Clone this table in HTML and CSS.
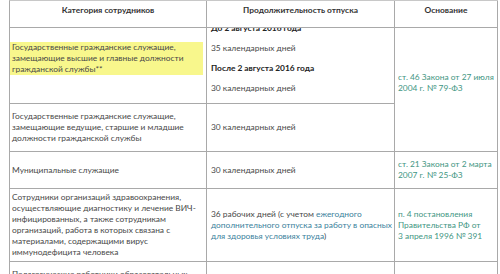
FILE: index.html
```html
<!DOCTYPE html>
<html lang="ru">
<head>
<meta charset="utf-8">
<title>Отпуск</title>
<link rel="stylesheet" href="styles.css">
</head>
<body>
<div class="sheet">
  <div class="grid head">
    <div class="th">Категория сотрудников</div>
    <div class="th">Продолжительность отпуска</div>
    <div class="th">Основание</div>
  </div>
  <div class="grid body">
    <div class="td c1"><p class="mark">Государственные гражданские служащие, замещающие высшие и главные должности гражданской службы**</p></div>
    <div class="td c2 stack">
      <p><b>До 2 августа 2016 года</b></p>
      <p>35 календарных дней</p>
      <p><b>После 2 августа 2016 года</b></p>
      <p>30 календарных дней</p>
    </div>
    <div class="td c3 span2"><p><a class="law" href="#">ст. 46 Закона от 27 июля 2004&nbsp;г. №&nbsp;79-ФЗ</a></p></div>

    <div class="td c1"><p>Государственные гражданские служащие, замещающие ведущие, старшие и младшие должности гражданской службы</p></div>
    <div class="td c2"><p>30 календарных дней</p></div>

    <div class="td c1"><p>Муниципальные служащие</p></div>
    <div class="td c2"><p>30 календарных дней</p></div>
    <div class="td c3"><p><a class="law" href="#">ст. 21 Закона от 2 марта 2007&nbsp;г. №&nbsp;25-ФЗ</a></p></div>

    <div class="td c1 tight"><p>Сотрудники организаций здравоохранения, осуществляющие диагностику и лечение ВИЧ-инфицированных, а также сотрудникам организаций, работа в которых связана с материалами, содержащими вирус иммунодефицита человека</p></div>
    <div class="td c2"><p>36 рабочих дней (с учетом <a class="ref" href="#">ежегодного дополнительного отпуска за работу в опасных для здоровья условиях труда</a>)</p></div>
    <div class="td c3"><p><a class="law" href="#">п. 4 постановления Правительства РФ от 3&nbsp;апреля 1996 №&nbsp;391</a></p></div>

    <div class="td c1"><p>Педагогические работники образовательных организаций</p></div>
    <div class="td c2"><p>56 календарных дней</p></div>
    <div class="td c3"><p><a class="law" href="#">ст. 334 ТК РФ</a></p></div>
  </div>
</div>
</body>
</html>
```

FILE: styles.css
```css
html, body {
  margin: 0;
  padding: 0;
  background: #ffffff;
}

body {
  font-family: Lato, "Open Sans", "Liberation Sans", sans-serif;
  font-size: 8.4px;
  line-height: 11px;
  color: #484848;
}

.sheet {
  padding-left: 9px;
}

.grid {
  display: grid;
  grid-template-columns: 197px 188px 103px;
  width: 489px;
  border-left: 1px solid #a9a9a9;
  box-sizing: border-box;
  background: #ffffff;
}

.head {
  position: relative;
  z-index: 1;
  border-top: 1px solid #c8c8c8;
}

.body {
  margin-top: -14px;
}

.th {
  padding: 4px 3px 11px;
  text-align: center;
  font-weight: 700;
  color: #333333;
  border-right: 1px solid #a9a9a9;
  border-bottom: 1px solid #a9a9a9;
  background: #ffffff;
}

.td {
  display: flex;
  flex-direction: column;
  justify-content: center;
  padding: 7px 3px 7px 2px;
  border-right: 1px solid #a9a9a9;
  border-bottom: 1px solid #a9a9a9;
}

.td p {
  margin: 0;
}

.c2 {
  padding-left: 4px;
  padding-right: 0;
}

.c3 {
  padding-left: 3px;
  padding-right: 2px;
}

.span2 {
  grid-row: span 2;
}

.tight {
  padding-top: 3px;
  padding-bottom: 3px;
}

.stack {
  padding-top: 9px;
  padding-bottom: 9px;
}

.stack p + p {
  margin-top: 9px;
}

.stack b {
  color: #222222;
}

.mark {
  background: #f8f78c;
  margin-left: -2px !important;
  padding-left: 2px;
}

a {
  text-decoration: none;
}

.law {
  color: #3f9683;
}

.ref {
  color: #3a7f9c;
}
```
